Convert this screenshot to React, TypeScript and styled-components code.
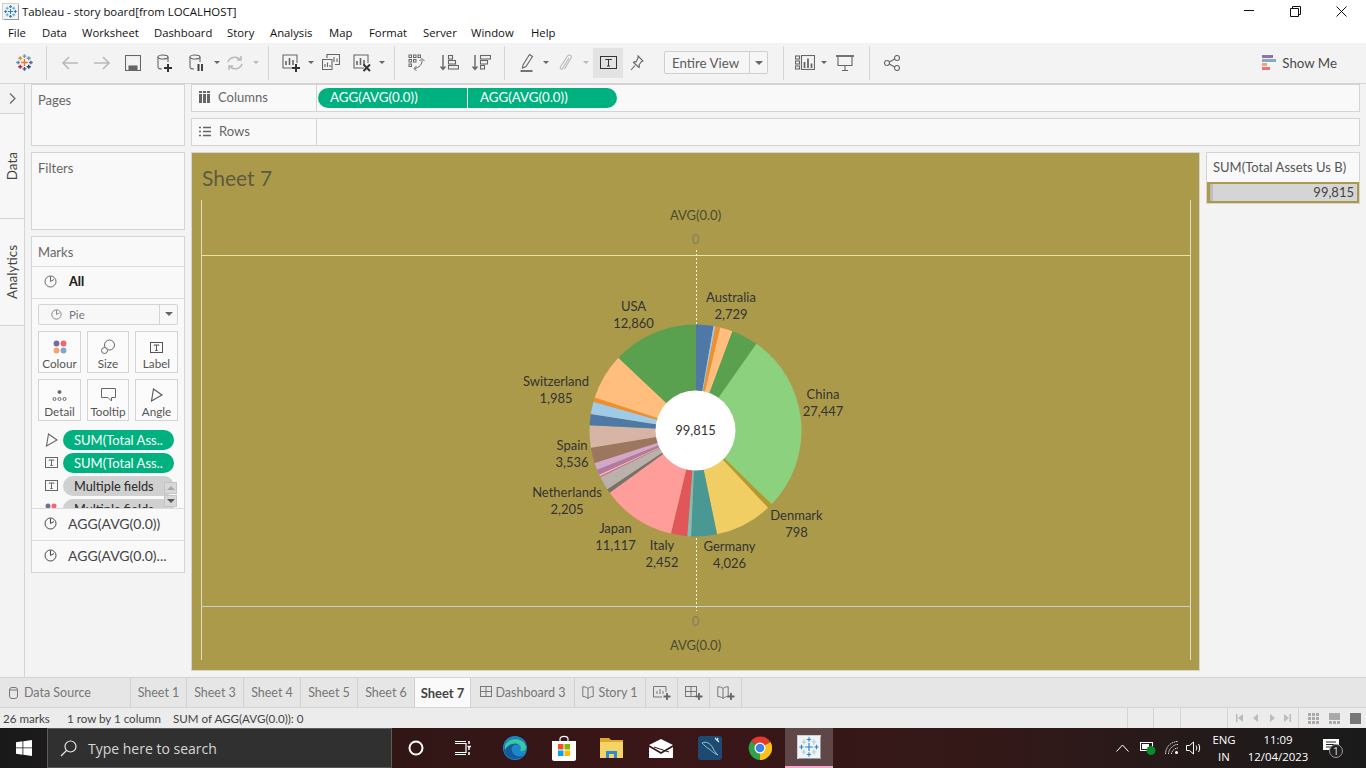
import React from 'react';
import styled, { createGlobalStyle } from 'styled-components';

const GlobalStyle = createGlobalStyle`
  html, body { margin: 0; padding: 0; height: 100%; overflow: hidden; background: #f3f3f3; }
  body { font-family: 'Lato', 'Open Sans', sans-serif; color: #555; }
  * { box-sizing: border-box; }
`;

const Page = styled.div`
  width: 1366px;
  height: 768px;
  display: flex;
  flex-direction: column;
  overflow: hidden;
`;

/* window chrome */
const TitleBar = styled.div`
  height: 22px;
  background: #fff;
  display: flex;
  align-items: center;
  padding-left: 3px;
  gap: 4px;
  font: 11.4px 'Open Sans', sans-serif;
  color: #111;
`;
const WindowButtons = styled.div`
  margin-left: auto;
  padding-right: 2px;
  display: flex;
  color: #111;
`;
const WindowButton = styled.div`
  width: 46px;
  height: 22px;
  display: flex;
  align-items: center;
  justify-content: center;
`;
const MenuBar = styled.div`
  height: 21px;
  background: #fff;
  display: flex;
  align-items: center;
  padding-left: 8px;
  font: 11.3px 'Open Sans', sans-serif;
  color: #111;
`;
const MenuItem = styled.span<{ $w: number }>`
  width: ${(p) => p.$w}px;
  flex: none;
  white-space: nowrap;
`;

/* toolbar */
const Toolbar = styled.div`
  height: 41px;
  background: #f3f3f3;
  border-bottom: 1px solid #d4d4d4;
  display: flex;
  align-items: center;
  padding: 0 29px 0 8px;
  color: #666;
`;
const ToolSlot = styled.div<{ $w: number; $off?: boolean; $on?: boolean; $ml?: number }>`
  width: ${(p) => p.$w}px;
  height: 30px;
  flex: none;
  margin-left: ${(p) => p.$ml ?? 0}px;
  display: flex;
  align-items: center;
  justify-content: center;
  color: ${(p) => (p.$off ? '#b9b9b9' : 'inherit')};
  background: ${(p) => (p.$on ? '#e3e3e3' : 'transparent')};
`;
const ToolSep = styled.div<{ $m?: number; $mr?: number }>`
  width: 1px;
  height: 34px;
  flex: none;
  margin: 0 ${(p) => p.$mr ?? p.$m ?? 6}px 0 ${(p) => p.$m ?? 6}px;
  background: #d6d6d6;
`;
const Caret = styled.div<{ $off?: boolean }>`
  width: 0;
  height: 0;
  border-left: 3px solid transparent;
  border-right: 3px solid transparent;
  border-top: 3px solid ${(p) => (p.$off ? '#b9b9b9' : '#666')};
`;
const FitSelect = styled.div`
  width: 104px;
  height: 23px;
  margin-left: 13px;
  flex: none;
  border: 1px solid #cfcfcf;
  border-radius: 2px;
  background: #f6f6f6;
  display: flex;
  align-items: center;
  font-size: 13.3px;
  color: #5c5c5c;
`;
const FitValue = styled.div`
  flex: 1;
  padding-left: 7px;
  white-space: nowrap;
`;
const FitArrow = styled.div`
  width: 18px;
  height: 100%;
  border-left: 1px solid #cfcfcf;
  display: flex;
  align-items: center;
  justify-content: center;
  & > div {
    border-left-width: 4px;
    border-right-width: 4px;
    border-top-width: 4px;
  }
`;
const ShowMe = styled.div`
  margin-left: auto;
  display: flex;
  align-items: center;
  gap: 6px;
  font-size: 13.3px;
  color: #4a4a4a;
`;

/* body */
const Body = styled.div`
  height: 594px;
  display: flex;
  background: #f3f3f3;
`;
const Rail = styled.div`
  width: 25px;
  flex: none;
  border-right: 1px solid #d4d4d4;
  display: flex;
  flex-direction: column;
`;
const RailToggle = styled.div`
  height: 30px;
  border-bottom: 1px solid #d4d4d4;
  display: flex;
  align-items: center;
  justify-content: center;
  color: #666;
`;
const RailTab = styled.div<{ $h: number }>`
  height: ${(p) => p.$h}px;
  border-bottom: 1px solid #d4d4d4;
  display: flex;
  align-items: center;
  justify-content: center;
  padding-right: 1px;
  background: #f7f7f7;
  font-size: 13.5px;
  color: #444;
  & > span {
    writing-mode: vertical-rl;
    transform: rotate(180deg);
  }
`;
const SideColumn = styled.div`
  width: 154px;
  flex: none;
  margin: 0 6px;
  display: flex;
  flex-direction: column;
  gap: 6px;
`;
const Card = styled.div<{ $h: number }>`
  height: ${(p) => p.$h}px;
  flex: none;
  background: #f9f9f9;
  border: 1px solid #d4d4d4;
`;
const CardTitle = styled.div`
  height: 29px;
  padding: 7px 0 0 6px;
  font-size: 13px;
  color: #666;
`;
const MarksTitle = styled(CardTitle)`
  height: 30px;
  border-bottom: 1px solid #dcdcdc;
`;
const AllRow = styled.div`
  height: 32px;
  border-bottom: 1px solid #dcdcdc;
  display: flex;
  align-items: center;
  padding-left: 12px;
  padding-bottom: 1px;
  gap: 12px;
  color: #666;
  font-size: 12.5px;
  font-weight: 700;
  & > b {
    color: #222;
  }
`;
const MarkSelect = styled.div`
  height: 21px;
  margin: 5px 6px 0;
  border: 1px solid #d4d4d4;
  background: #f7f7f7;
  border-radius: 2px;
  display: flex;
  align-items: center;
  padding-left: 12px;
  gap: 7px;
  font-size: 11.5px;
  color: #777;
`;
const MarkSelectArrow = styled.div`
  margin-left: auto;
  width: 18px;
  height: 100%;
  border-left: 1px solid #d4d4d4;
  display: flex;
  align-items: center;
  justify-content: center;
  & > div {
    border-left-width: 4px;
    border-right-width: 4px;
    border-top-width: 4px;
  }
`;
const MarkGrid = styled.div`
  margin: 6px 6px 0;
  display: grid;
  grid-template-columns: 43px 42px 43px;
  grid-auto-rows: 42px;
  column-gap: 6px;
  row-gap: 6px;
`;
const MarkButton = styled.div`
  border: 1px solid #d4d4d4;
  background: #fbfbfb;
  display: flex;
  flex-direction: column;
  align-items: center;
  justify-content: flex-end;
  padding-bottom: 2px;
  gap: 2px;
  font-size: 11.7px;
  white-space: nowrap;
  color: #555;
`;
const FieldList = styled.div`
  position: relative;
  height: 79px;
  margin-top: 9px;
  padding-left: 12px;
  overflow: hidden;
  border-bottom: 1px solid #dcdcdc;
  display: flex;
  flex-direction: column;
  gap: 3px;
`;
const FieldRow = styled.div`
  display: flex;
  align-items: center;
  gap: 5px;
  flex: none;
  height: 20px;
  color: #666;
`;
const FieldIcon = styled.div`
  width: 14px;
  display: flex;
  justify-content: center;
  flex: none;
`;
const MarkPill = styled.div<{ $grey?: boolean }>`
  width: 111px;
  height: 20px;
  border-radius: 10px;
  padding-left: 11px;
  line-height: 20px;
  font-size: ${(p) => (p.$grey ? 12.7 : 13)}px;
  white-space: nowrap;
  overflow: hidden;
  background: ${(p) => (p.$grey ? '#d0d0d0' : '#00b180')};
  color: ${(p) => (p.$grey ? '#333' : '#fff')};
  font-weight: ${(p) => (p.$grey ? 500 : 400)};
`;
const ScrollArrows = styled.div`
  position: absolute;
  right: 7px;
  bottom: 1px;
  width: 13px;
  display: flex;
  flex-direction: column;
  gap: 1px;
`;
const ScrollArrow = styled.div<{ $up?: boolean }>`
  height: 12px;
  background: #d8d8d8;
  border: 1px solid #c4c4c4;
  display: flex;
  align-items: center;
  justify-content: center;
  &::after {
    content: '';
    border-left: 4px solid transparent;
    border-right: 4px solid transparent;
    ${(p) => (p.$up ? 'border-bottom: 4px solid #a8a8a8;' : 'border-top: 4px solid #555;')}
  }
`;
const AggRow = styled.div<{ $line?: boolean }>`
  height: ${(p) => (p.$line ? 32 : 31)}px;
  display: flex;
  align-items: center;
  padding-left: 12px;
  padding-bottom: 1px;
  gap: 11px;
  font-size: 14px;
  white-space: nowrap;
  color: #444;
  border-bottom: ${(p) => (p.$line ? '1px solid #dcdcdc' : 'none')};
`;

const Workspace = styled.div`
  flex: 1;
  margin-right: 6px;
  display: flex;
  flex-direction: column;
  gap: 6px;
  min-width: 0;
`;
const Shelf = styled.div`
  height: 28px;
  flex: none;
  background: #f9f9f9;
  border: 1px solid #d4d4d4;
  display: flex;
  align-items: center;
`;
const ShelfLabel = styled.div`
  width: 125px;
  height: 100%;
  flex: none;
  border-right: 1px solid #d4d4d4;
  display: flex;
  align-items: center;
  gap: 8px;
  padding: 0 0 1px 7px;
  font-size: 13px;
  color: #666;
`;
const ShelfPills = styled.div`
  display: flex;
  gap: 1px;
  padding-left: 1px;
`;
const ShelfPill = styled.div<{ $side: 'left' | 'right' }>`
  width: 149px;
  height: 20px;
  background: #00b180;
  color: #fff;
  font-size: 13.3px;
  line-height: 19px;
  padding-left: 12px;
  border-radius: ${(p) => (p.$side === 'left' ? '10px 0 0 10px' : '0 10px 10px 0')};
`;
const ViewRow = styled.div`
  flex: 1;
  display: flex;
  gap: 6px;
  min-height: 0;
`;
const SheetView = styled.div`
  width: 1009px;
  height: 519px;
  flex: none;
  background: #ab9a4a;
  border: 1px solid #d4d4d4;
  display: flex;
  flex-direction: column;
`;
const SheetTitle = styled.div`
  height: 47px;
  padding: 12px 0 0 10px;
  font-size: 21px;
  line-height: 26px;
  color: #5d5a3f;
`;
const ChartSvg = styled.svg`
  display: block;
  font-family: 'Lato', 'Open Sans', sans-serif;
  font-size: 13px;
`;
const Legend = styled.div`
  width: 154px;
  height: 52px;
  flex: none;
  background: #f9f9f9;
  border: 1px solid #d4d4d4;
`;
const LegendTitle = styled.div`
  height: 29px;
  padding: 6px 0 0 6px;
  font-size: 13px;
  color: #555;
  white-space: nowrap;
`;
const LegendBar = styled.div`
  height: 21px;
  background: #d5d5d5;
  border: 2px solid #ab9a4a;
  border-left-width: 3px;
  font-size: 13px;
  line-height: 17px;
  text-align: right;
  padding-right: 3px;
  color: #444;
  box-shadow: inset 3px 0 0 #bdbdbd;
`;

/* sheet tabs + status */
const TabBar = styled.div`
  height: 31px;
  flex: none;
  display: flex;
  background: #e6e6e6;
  border-top: 1px solid #d4d4d4;
  border-bottom: 1px solid #d4d4d4;
`;
const SheetTab = styled.div<{ $w: number; $active?: boolean }>`
  width: ${(p) => p.$w}px;
  flex: none;
  border-right: 1px solid #d0d0d0;
  display: flex;
  align-items: center;
  justify-content: center;
  gap: 4px;
  font-size: ${(p) => (p.$active ? 13 : 12.5)}px;
  white-space: nowrap;
  color: ${(p) => (p.$active ? '#444' : '#777')};
  font-weight: ${(p) => (p.$active ? 700 : 400)};
  background: ${(p) => (p.$active ? '#fafafa' : 'transparent')};
`;
const DataSourceTab = styled(SheetTab)`
  justify-content: flex-start;
  padding-left: 9px;
  gap: 6px;
`;
const StatusBar = styled.div`
  height: 20px;
  flex: none;
  background: #ececec;
  display: flex;
  align-items: center;
  font-size: 11.6px;
  color: #444;
`;
const StatusText = styled.span<{ $w: number }>`
  width: ${(p) => p.$w}px;
  flex: none;
  padding-left: 3px;
  white-space: nowrap;
`;
const StatusCell = styled.div<{ $w: number }>`
  width: ${(p) => p.$w}px;
  height: 100%;
  flex: none;
  border-left: 1px solid #d4d4d4;
  display: flex;
  align-items: center;
  justify-content: center;
`;
const ViewModes = styled(StatusCell)`
  justify-content: flex-start;
  padding-left: 9px;
  gap: 10px;
`;

/* taskbar */
const Taskbar = styled.div`
  height: 40px;
  flex: none;
  display: flex;
  align-items: center;
  color: #fff;
  background: linear-gradient(90deg, #191919 0, #1c1a1a 47px, #311616 395px, #3a1618 650px, #331818 1000px, #241a1a 1200px, #1a1a1a 1366px);
  font: 11.4px 'Open Sans', sans-serif;
`;
const StartButton = styled.div`
  width: 47px;
  height: 100%;
  flex: none;
  display: flex;
  align-items: center;
  justify-content: center;
`;
const SearchBox = styled.div`
  width: 345px;
  height: 100%;
  flex: none;
  background: #303030;
  border: 1px solid #5c5c5c;
  border-bottom-color: #555;
  display: flex;
  align-items: center;
  gap: 11px;
  padding-left: 12px;
  font-size: 14px;
  color: #d6d6d6;
`;
const TaskIcon = styled.div<{ $w: number; $active?: boolean; $ml?: number }>`
  width: ${(p) => p.$w}px;
  height: 100%;
  flex: none;
  margin-left: ${(p) => p.$ml ?? 0}px;
  display: flex;
  align-items: center;
  justify-content: center;
  background: ${(p) => (p.$active ? '#604747' : 'transparent')};
  border-bottom: ${(p) => (p.$active ? '2px solid #f4a6cf' : 'none')};
`;
const LogoTile = styled.div<{ $size: number }>`
  width: ${(p) => p.$size}px;
  height: ${(p) => p.$size}px;
  flex: none;
  display: flex;
  align-items: center;
  justify-content: center;
  background: #f2f5f8;
  box-shadow: 1px 1px 0 #9a9a9a, 0 0 0 1px #cfcfcf;
`;
const Tray = styled.div`
  margin-left: auto;
  display: flex;
  align-items: center;
  height: 100%;
`;
const TraySlot = styled.div<{ $w: number }>`
  width: ${(p) => p.$w}px;
  flex: none;
  display: flex;
  justify-content: center;
`;
const TrayStack = styled.div<{ $w: number }>`
  width: ${(p) => p.$w}px;
  flex: none;
  text-align: center;
  line-height: 17px;
  white-space: nowrap;
`;

/* icons */
type IconProps = { w?: number; h?: number; children: React.ReactNode; sw?: number };
const Ico = ({ w = 18, h = 18, sw = 1.1, children }: IconProps) => (
  <svg width={w} height={h} viewBox={`0 0 ${w} ${h}`} fill="none" stroke="currentColor" strokeWidth={sw}>
    {children}
  </svg>
);

// centre, top, bottom, left, right, then the four diagonals
const crossLayout = (scale: number) =>
  [
    [10, 10, 4],
    [10, 2.5, 2.2],
    [10, 17.5, 2.2],
    [2.5, 10, 2.2],
    [17.5, 10, 2.2],
    [5, 5, 2.4],
    [15, 5, 2.4],
    [5, 15, 2.4],
    [15, 15, 2.4],
  ].map(([x, y, r]) => [x * scale, y * scale, r * scale]);

const TableauMark = ({ size = 20, colors, sw = 1.3 }: { size?: number; colors: string[]; sw?: number }) => (
  <svg width={size} height={size} viewBox={`0 0 ${size} ${size}`} strokeWidth={sw}>
    {crossLayout(size / 20).map(([x, y, r], i) => (
      <path key={i} d={`M${x - r} ${y}H${x + r}M${x} ${y - r}V${y + r}`} stroke={colors[i % colors.length]} />
    ))}
  </svg>
);

const Plus = ({ x, y }: { x: number; y: number }) => (
  <path d={`M${x - 4} ${y}H${x + 4}M${x} ${y - 4}V${y + 4}`} stroke="#333" strokeWidth={2} />
);
const SheetGlyph = ({ extra }: { extra?: React.ReactNode }) => (
  <Ico w={20} h={20}>
    <path d="M12 15H2V2H16V10" />
    <path d="M5 12V8M8.500 12V5M12 12V7" strokeWidth={1.6} />
    {extra}
  </Ico>
);
const DbGlyph = ({ extra }: { extra?: React.ReactNode }) => (
  <Ico w={20} h={20}>
    <ellipse cx={8} cy={4} rx={5} ry={2} />
    <path d="M3 4V14C3 15.500 5 16 7 16M13 4V9" />
    {extra}
  </Ico>
);
const PieIcon = ({ size = 13 }: { size?: number }) => (
  <svg width={size} height={size} viewBox="0 0 13 13" fill="none" stroke="currentColor" strokeWidth={1}>
    <circle cx={6.500} cy={6.500} r={5.500} />
    <path d="M6.500 1.500V6.500L10 4.500" />
  </svg>
);
const TextBox = ({ size = 13 }: { size?: number }) => (
  <svg width={size} height={size} viewBox="0 0 13 13" fill="none" stroke="currentColor" strokeWidth={1}>
    <rect x={0.500} y={1.500} width={12} height={10} />
    <path d="M4 4.500V4H9V4.500M6.500 4V9.500M5.300 9.500H7.700" />
  </svg>
);
const AngleIcon = () => (
  <svg width={13} height={14} viewBox="0 0 13 14" fill="none" stroke="currentColor" strokeWidth={1.100}>
    <path d="M3.500 1L12 7L1.500 13Z" />
  </svg>
);
const DotsIcon = ({ size = 12 }: { size?: number }) => (
  <svg width={size} height={size} viewBox="0 0 12 12">
    <circle cx={3} cy={3} r={2.500} fill="#7b6a96" />
    <circle cx={9} cy={3} r={2.500} fill="#f0656e" />
    <circle cx={3} cy={9} r={2.500} fill="#f3a56b" />
    <circle cx={9} cy={9} r={2.500} fill="#7fa6d0" />
  </svg>
);
const DbSmall = () => (
  <svg width={9} height={12} viewBox="0 0 9 12" fill="none" stroke="#777" strokeWidth={1}>
    <rect x={0.500} y={0.500} width={8} height={11} rx={2.500} />
    <path d="M1 3H8" />
  </svg>
);
const DashGlyph = ({ extra }: { extra?: React.ReactNode }) => (
  <svg width={extra ? 18 : 12} height={16} viewBox={`0 0 ${extra ? 18 : 12} 16`} fill="none" stroke="#777" strokeWidth={1}>
    <rect x={0.500} y={1.500} width={11} height={10} />
    <path d="M0.500 6.500H11.500M6 1.500V11.500" />
    {extra}
  </svg>
);
const BookGlyph = ({ extra }: { extra?: React.ReactNode }) => (
  <svg width={extra ? 18 : 12} height={16} viewBox={`0 0 ${extra ? 18 : 12} 16`} fill="none" stroke="#777" strokeWidth={1}>
    <path d="M6 3.500C4.500 2 2.500 1.800 0.800 1.800V11.500C2.500 11.500 4.500 12 6 13.500C7.500 12 9.500 11.500 11.200 11.500V1.800C9.500 1.800 7.500 2 6 3.500ZM6 3.500V13.500" />
    {extra}
  </svg>
);
const GreyPlus = () => <path d="M14 8V15M10.500 11.500H17.500" stroke="#666" strokeWidth={1.800} />;

/* chart data: angles are read clockwise from 12 o'clock */
const CX = 695.5;
const CY = 430.5;
const R = 106;

const slices: [number, string][] = [
  [9.8, '#4e79a7'],
  [10.9, '#a0cbe8'],
  [13.5, '#f28e2b'],
  [20.4, '#ffbe7d'],
  [35.1, '#59a14f'],
  [134.1, '#8cd17d'],
  [136.8, '#b6992d'],
  [168.3, '#f1ce63'],
  [182.4, '#499894'],
  [184.5, '#86bcb6'],
  [193.4, '#e15759'],
  [234.1, '#ff9d9a'],
  [236.4, '#79706e'],
  [243.8, '#bab0ac'],
  [244.6, '#d37295'],
  [245.4, '#fabfd2'],
  [248.2, '#b07aa1'],
  [252.1, '#d4a6c8'],
  [260.7, '#9d7660'],
  [272.9, '#d7b5a6'],
  [279, '#4e79a7'],
  [285.8, '#a0cbe8'],
  [288.1, '#f28e2b'],
  [313.3, '#ffbe7d'],
  [360, '#59a14f'],
];

const labels: [string, string, number, number][] = [
  ['USA', '12,860', 633.5, 311],
  ['Australia', '2,729', 731, 302],
  ['China', '27,447', 823, 399],
  ['Denmark', '798', 796.5, 520],
  ['Germany', '4,026', 729.5, 551],
  ['Italy', '2,452', 662, 550],
  ['Japan', '11,117', 615.5, 533],
  ['Netherlands', '2,205', 567, 497],
  ['Spain', '3,536', 572, 450],
  ['Switzerland', '1,985', 556, 386],
];

const point = (deg: number) => {
  const rad = (deg * Math.PI) / 180;
  return `${(CX + R * Math.sin(rad)).toFixed(2)} ${(CY - R * Math.cos(rad)).toFixed(2)}`;
};

const PieChart = () => (
  <ChartSvg width={1007} height={470} viewBox="192 200 1007 470">
    <path d="M201.500 200V660M1190.500 200V660" stroke="#dcdcc8" strokeWidth={1} />
    <path d="M201 255.500H1191" stroke="#e9e2a6" strokeWidth={1} />
    <path d="M201 606.500H1191" stroke="#c9cdd6" strokeWidth={1} />
    <path d="M696.500 250V611" stroke="#f2f2f2" strokeWidth={1} strokeDasharray="2 2" />
    <text x={695.5} y={220} textAnchor="middle" fill="#4a4a33">AVG(0.0)</text>
    <text x={695.5} y={244} textAnchor="middle" fill="#86805a">0</text>
    <text x={695.5} y={626} textAnchor="middle" fill="#86805a">0</text>
    <text x={695.5} y={650} textAnchor="middle" fill="#4a4a33">AVG(0.0)</text>
    {slices.map(([end, color], i) => {
      const start = i === 0 ? 0 : slices[i - 1][0];
      const large = end - start > 180 ? 1 : 0;
      return (
        <path
          key={i}
          d={`M${CX} ${CY}L${point(start)}A${R} ${R} 0 ${large} 1 ${point(end)}Z`}
          fill={color}
        />
      );
    })}
    <circle cx={CX} cy={CY} r={40} fill="#fff" />
    <text x={CX} y={434.5} textAnchor="middle" fill="#333">99,815</text>
    {labels.map(([name, value, x, y]) => (
      <g key={name} textAnchor="middle" fill="#333">
        <text x={x} y={y}>{name}</text>
        <text x={x} y={y + 17}>{value}</text>
      </g>
    ))}
  </ChartSvg>
);

const menu: [string, number][] = [
  ['File', 34],
  ['Data', 40],
  ['Worksheet', 72],
  ['Dashboard', 73],
  ['Story', 43],
  ['Analysis', 59],
  ['Map', 40],
  ['Format', 54],
  ['Server', 48],
  ['Window', 60],
  ['Help', 40],
];

const tabs: [string, number][] = [
  ['Sheet 1', 56],
  ['Sheet 3', 57],
  ['Sheet 4', 57],
  ['Sheet 5', 57],
  ['Sheet 6', 57],
];

const logoColors = ['#e8762d', '#6f9bb0', '#3c5a86', '#5b8fb0', '#5b6591', '#eb912b', '#7099a6', '#c72035', '#1f447e'];
const tileColors = ['#2f86c8', '#2f86c8', '#2f86c8', '#2f86c8', '#2f86c8', '#a9cde8', '#a9cde8', '#a9cde8', '#a9cde8'];

const App = () => (
  <Page>
    <GlobalStyle />
    <TitleBar>
      <LogoTile $size={15}>
        <TableauMark size={13} sw={1.1} colors={['#2f7fb5', '#2f7fb5', '#2f7fb5', '#2f7fb5', '#2f7fb5', '#6fa9d0', '#6fa9d0', '#6fa9d0', '#6fa9d0']} />
      </LogoTile>
      Tableau - story board[from LOCALHOST]
      <WindowButtons>
        <WindowButton>
          <svg width={10} height={10} stroke="currentColor"><path d="M0 4.500H10" /></svg>
        </WindowButton>
        <WindowButton>
          <svg width={11} height={11} fill="none" stroke="currentColor"><path d="M0.500 2.500H8.500V10.500H0.500ZM2.500 2.500V0.500H10.500V8.500H8.500" /></svg>
        </WindowButton>
        <WindowButton>
          <svg width={11} height={11} stroke="currentColor"><path d="M0.500 0.500L10.500 10.500M10.500 0.500L0.500 10.500" /></svg>
        </WindowButton>
      </WindowButtons>
    </TitleBar>
    <MenuBar>
      {menu.map(([name, w]) => (
        <MenuItem key={name} $w={w}>{name}</MenuItem>
      ))}
    </MenuBar>
    <Toolbar>
      <ToolSlot $w={32}><TableauMark size={17} sw={1.4} colors={logoColors} /></ToolSlot>
      <ToolSep />
      <ToolSlot $w={34} $off>
        <Ico sw={1.600}><path d="M17 9H2M8 3L2 9L8 15" /></Ico>
      </ToolSlot>
      <ToolSlot $w={30} $off>
        <Ico sw={1.600}><path d="M1 9H16M10 3L16 9L10 15" /></Ico>
      </ToolSlot>
      <ToolSlot $w={32}>
        <Ico w={16} h={16}>
          <rect x={0.500} y={0.500} width={15} height={15} />
          <rect x={4} y={11} width={8} height={4.500} fill="currentColor" />
        </Ico>
      </ToolSlot>
      <ToolSlot $w={32}><DbGlyph extra={<Plus x={13} y={15} />} /></ToolSlot>
      <ToolSlot $w={32}>
        <DbGlyph extra={<path d="M11.500 11V18M15 11V18" stroke="#444" strokeWidth={2} />} />
      </ToolSlot>
      <ToolSlot $w={7}><Caret /></ToolSlot>
      <ToolSlot $w={30} $off>
        <Ico sw={1.500}>
          <path d="M2 8C3 4 8 2 12 4L15 6M15 2V6H11M16 10C15 14 10 16 6 14L3 12M3 16V12H7" />
        </Ico>
      </ToolSlot>
      <ToolSlot $w={12}><Caret $off /></ToolSlot>
      <ToolSep />
      <ToolSlot $w={32}><SheetGlyph extra={<Plus x={15} y={15} />} /></ToolSlot>
      <ToolSlot $w={7}><Caret /></ToolSlot>
      <ToolSlot $w={34}>
        <Ico w={18} h={18}>
          <path d="M5 4V0.500H17.500V10.500H13" />
          <path d="M9 8V5M12 8V3M15 8V4.500" />
          <path d="M0.500 5.500H10V15.500H0.500Z" fill="#f3f3f3" />
          <path d="M3 13V10M5.500 13V8.500M8 13V11" />
        </Ico>
      </ToolSlot>
      <ToolSlot $w={28}>
        <SheetGlyph
          extra={<path d="M11.500 11.500L18 18M18 11.500L11.500 18" stroke="#333" strokeWidth={2} />}
        />
      </ToolSlot>
      <ToolSlot $w={12}><Caret /></ToolSlot>
      <ToolSep />
      <ToolSlot $w={32}>
        <Ico w={18} h={18} sw={1}>
          <rect x={1} y={1} width={2.500} height={2.500} />
          <rect x={5.500} y={1} width={2.500} height={2.500} />
          <rect x={10} y={1} width={2.500} height={2.500} />
          <rect x={1} y={5.500} width={2.500} height={2.500} />
          <rect x={5.500} y={5.500} width={2.500} height={2.500} />
          <rect x={1} y={10} width={2.500} height={2.500} />
          <path d="M14 6C14.500 10 11 14 6.500 14.500M11.500 7L14 4.500L16.500 7M8.500 12L6 14.500L8.500 17" />
        </Ico>
      </ToolSlot>
      <ToolSlot $w={32}>
        <Ico w={19} h={18}>
          <path d="M3 1V15M0.500 12.500L3 15.500L5.500 12.500" strokeWidth={1.400} />
          <rect x={8.500} y={1.500} width={4} height={3.500} />
          <rect x={8.500} y={6.500} width={7} height={3.500} />
          <rect x={8.500} y={11.500} width={10} height={3.500} />
        </Ico>
      </ToolSlot>
      <ToolSlot $w={32}>
        <Ico w={19} h={18}>
          <path d="M3 1V15M0.500 12.500L3 15.500L5.500 12.500" strokeWidth={1.400} />
          <rect x={8.500} y={1.500} width={10} height={3.500} />
          <rect x={8.500} y={6.500} width={7} height={3.500} />
          <rect x={8.500} y={11.500} width={4} height={3.500} />
        </Ico>
      </ToolSlot>
      <ToolSep $m={7} />
      <ToolSlot $w={30}>
        <Ico w={14} h={19}>
          <path d="M3 12L9.500 1.500L12.500 3.500L6 13.500L2.500 15Z" />
          <path d="M0.500 18H12.500" strokeWidth={1.800} />
        </Ico>
      </ToolSlot>
      <ToolSlot $w={7}><Caret /></ToolSlot>
      <ToolSlot $w={34} $off>
        <Ico w={14} h={18}>
          <path d="M10 4L4 14C3 16 0.500 15 1.500 13L8.500 2C10 0 13 1.500 12 4L5.500 15" />
        </Ico>
      </ToolSlot>
      <ToolSlot $w={5}><Caret $off /></ToolSlot>
      <ToolSlot $w={30} $on $ml={5}>
        <svg width={17} height={15} viewBox="0 0 17 15" fill="none" stroke="#333" strokeWidth={1}>
          <rect x={0.500} y={1.500} width={16} height={12} />
          <path d="M5.500 5V4.500H11.500V5M8.500 4.500V11M7 11H10" />
        </svg>
      </ToolSlot>
      <ToolSlot $w={28}>
        <Ico w={14} h={16}>
          <path d="M8 1L13 6L11.500 6.500L9 10C9.500 11 9.500 12 9 12.500L3.500 7.500C4 6.500 5 6.500 6 7L8 3Z" />
          <path d="M5 10.500L1 15" />
        </Ico>
      </ToolSlot>
      <FitSelect>
        <FitValue>Entire View</FitValue>
        <FitArrow><Caret /></FitArrow>
      </FitSelect>
      <ToolSep $m={15} $mr={6} />
      <ToolSlot $w={30}>
        <Ico w={20} h={15}>
          <rect x={0.500} y={1} width={4} height={3} />
          <rect x={0.500} y={6} width={4} height={3} />
          <rect x={0.500} y={11} width={4} height={3} />
          <rect x={6.500} y={0.500} width={13} height={14} />
          <path d="M9.500 13V7M13 13V3.500M16.500 13V8.500" strokeWidth={1.800} />
        </Ico>
      </ToolSlot>
      <ToolSlot $w={7}><Caret /></ToolSlot>
      <ToolSlot $w={36}>
        <Ico w={18} h={16}>
          <path d="M0 1H18" strokeWidth={1.800} />
          <path d="M2 1.500V10.500H16V1.500M9 10.500V15M6 15.500H12" />
        </Ico>
      </ToolSlot>
      <ToolSep />
      <ToolSlot $w={32}>
        <Ico w={16} h={16}>
          <circle cx={3} cy={8} r={2.500} />
          <circle cx={13} cy={3} r={2.500} />
          <circle cx={13} cy={13} r={2.500} />
          <path d="M5.300 7L10.700 4M5.300 9L10.700 12" />
        </Ico>
      </ToolSlot>
      <ShowMe>
        <svg width={14} height={16} viewBox="0 0 14 16">
          <rect x={0} y={0} width={11} height={3} fill="#8a76a0" />
          <rect x={0} y={4} width={14} height={3} fill="#84a8cf" />
          <rect x={0} y={8} width={5} height={3} fill="#f3a56b" />
          <rect x={0} y={12} width={8} height={3} fill="#f0707a" />
        </svg>
        Show Me
      </ShowMe>
    </Toolbar>

    <Body>
      <Rail>
        <RailToggle>
          <svg width={7} height={11} fill="none" stroke="currentColor" strokeWidth={1.200}><path d="M1 0.500L6 5.500L1 10.500" /></svg>
        </RailToggle>
        <RailTab $h={105}><span>Data</span></RailTab>
        <RailTab $h={107}><span>Analytics</span></RailTab>
      </Rail>
      <SideColumn>
        <Card $h={62}><CardTitle>Pages</CardTitle></Card>
        <Card $h={78}><CardTitle>Filters</CardTitle></Card>
        <Card $h={337}>
          <MarksTitle>Marks</MarksTitle>
          <AllRow><PieIcon /><b>All</b></AllRow>
          <MarkSelect>
            <PieIcon size={11} />
            Pie
            <MarkSelectArrow><Caret /></MarkSelectArrow>
          </MarkSelect>
          <MarkGrid>
            <MarkButton><DotsIcon size={14} />Colour</MarkButton>
            <MarkButton>
              <svg width={15} height={15} viewBox="0 0 15 15" fill="none" stroke="#666">
                <circle cx={8.500} cy={6} r={5} />
                <circle cx={3.500} cy={11.500} r={3} fill="#fbfbfb" />
              </svg>
              Size
            </MarkButton>
            <MarkButton><TextBox />Label</MarkButton>
            <MarkButton>
              <svg width={15} height={12} viewBox="0 0 15 12" fill="none" stroke="#666">
                <circle cx={7.500} cy={2} r={1.500} fill="#666" />
                <circle cx={2.500} cy={9} r={1.500} />
                <circle cx={7.500} cy={9} r={1.500} />
                <circle cx={12.500} cy={9} r={1.500} />
              </svg>
              Detail
            </MarkButton>
            <MarkButton>
              <svg width={15} height={14} viewBox="0 0 15 14" fill="none" stroke="#666">
                <path d="M0.500 0.500H14.500V9.500H10.500V13L7 9.500H0.500Z" />
              </svg>
              Tooltip
            </MarkButton>
            <MarkButton><AngleIcon />Angle</MarkButton>
          </MarkGrid>
          <FieldList>
            <FieldRow><FieldIcon><AngleIcon /></FieldIcon><MarkPill>SUM(Total Ass..</MarkPill></FieldRow>
            <FieldRow><FieldIcon><TextBox /></FieldIcon><MarkPill>SUM(Total Ass..</MarkPill></FieldRow>
            <FieldRow><FieldIcon><TextBox /></FieldIcon><MarkPill $grey>Multiple fields</MarkPill></FieldRow>
            <FieldRow><FieldIcon><DotsIcon /></FieldIcon><MarkPill $grey>Multiple fields</MarkPill></FieldRow>
            <ScrollArrows>
              <ScrollArrow $up />
              <ScrollArrow />
            </ScrollArrows>
          </FieldList>
          <AggRow $line><PieIcon />AGG(AVG(0.0))</AggRow>
          <AggRow><PieIcon />AGG(AVG(0.0)...</AggRow>
        </Card>
      </SideColumn>
      <Workspace>
        <Shelf>
          <ShelfLabel>
            <svg width={11} height={12} fill="#666"><path d="M0 3H3V12H0ZM4 3H7V12H4ZM8 3H11V12H8ZM0 0H3V2H0ZM4 0H7V2H4ZM8 0H11V2H8Z" /></svg>
            Columns
          </ShelfLabel>
          <ShelfPills>
            <ShelfPill $side="left">AGG(AVG(0.0))</ShelfPill>
            <ShelfPill $side="right">AGG(AVG(0.0))</ShelfPill>
          </ShelfPills>
        </Shelf>
        <Shelf>
          <ShelfLabel>
            <svg width={12} height={11} stroke="#666" strokeWidth={1.600}><path d="M0 1.500H2M4 1.500H12M0 5.500H2M4 5.500H12M0 9.500H2M4 9.500H12" /></svg>
            Rows
          </ShelfLabel>
        </Shelf>
        <ViewRow>
          <SheetView>
            <SheetTitle>Sheet 7</SheetTitle>
            <PieChart />
          </SheetView>
          <Legend>
            <LegendTitle>SUM(Total Assets Us B)</LegendTitle>
            <LegendBar>99,815</LegendBar>
          </Legend>
        </ViewRow>
      </Workspace>
    </Body>

    <TabBar>
      <DataSourceTab $w={131}><DbSmall />Data Source</DataSourceTab>
      {tabs.map(([name, w]) => (
        <SheetTab key={name} $w={w}>{name}</SheetTab>
      ))}
      <SheetTab $w={56} $active>Sheet 7</SheetTab>
      <SheetTab $w={104}><DashGlyph />Dashboard 3</SheetTab>
      <SheetTab $w={71}><BookGlyph />Story 1</SheetTab>
      <SheetTab $w={32}>
        <svg width={18} height={16} viewBox="0 0 18 16" fill="none" stroke="#777">
          <path d="M9 12H0.500V1.500H13V7" />
          <path d="M4 9V6M7 9V4M10 9V6" />
          <GreyPlus />
        </svg>
      </SheetTab>
      <SheetTab $w={32}><DashGlyph extra={<GreyPlus />} /></SheetTab>
      <SheetTab $w={32}><BookGlyph extra={<GreyPlus />} /></SheetTab>
    </TabBar>
    <StatusBar>
      <StatusText $w={64}>26 marks</StatusText>
      <StatusText $w={106}>1 row by 1 column</StatusText>
      <StatusText $w={957}>SUM of AGG(AVG(0.0)): 0</StatusText>
      <StatusCell $w={26} />
      <StatusCell $w={27} />
      <StatusCell $w={47} />
      <StatusCell $w={71}>
        <svg width={55} height={9} viewBox="0 0 55 9" fill="#bcbcbc">
          <path d="M0 0H1.500V8H0ZM7 0V8L2 4ZM22 0V8L17 4ZM34 0V8L39 4ZM48 0V8L53 4ZM53.500 0H55V8H53.500Z" />
        </svg>
      </StatusCell>
      <ViewModes $w={68}>
        <svg width={11} height={11} viewBox="0 0 11 11" fill="#aaa">
          <path d="M0 0H3V3H0ZM4 0H7V3H4ZM8 0H11V3H8ZM0 4H3V7H0ZM4 4H7V7H4ZM8 4H11V7H8ZM0 8H3V11H0ZM4 8H7V11H4ZM8 8H11V11H8Z" />
        </svg>
        <svg width={11} height={11} viewBox="0 0 11 11" fill="#aaa">
          <path d="M0 0H11V7H0ZM0 8H3V11H0ZM4 8H7V11H4ZM8 8H11V11H8Z" />
        </svg>
        <svg width={11} height={11} fill="#777"><rect width={11} height={11} /></svg>
      </ViewModes>
    </StatusBar>

    <Taskbar>
      <StartButton>
        <svg width={16} height={16} viewBox="0 0 16 16" fill="#fff">
          <path d="M0 2.200L6.500 1.300V7.500H0ZM7.300 1.200L16 0V7.500H7.300ZM0 8.300H6.500V14.700L0 13.800ZM7.300 8.300H16V16L7.300 14.800Z" />
        </svg>
      </StartButton>
      <SearchBox>
        <svg width={17} height={17} viewBox="0 0 17 17" fill="none" stroke="#e6e6e6" strokeWidth={1.200}>
          <circle cx={10.500} cy={6.500} r={5.500} />
          <path d="M6.500 10.500L1 16" />
        </svg>
        Type here to search
      </SearchBox>
      <TaskIcon $w={48}>
        <svg width={16} height={16}><circle cx={8} cy={8} r={6.500} fill="none" stroke="#fff" strokeWidth={2} /></svg>
      </TaskIcon>
      <TaskIcon $w={46}>
        <svg width={17} height={15} viewBox="0 0 17 15" fill="none" stroke="#fff" strokeWidth={1.200}>
          <path d="M0 2.500H11V11.500H0M0 0.500H11M0 13.500H11" />
          <path d="M14 0V3M14 6V9M14 11V14M12.500 5.500H16" strokeWidth={1.500} />
        </svg>
      </TaskIcon>
      <TaskIcon $w={50} $ml={4}>
        <svg width={24} height={24} viewBox="0 0 24 24">
          <circle cx={12} cy={12} r={12} fill="#1d87c9" />
          <path d="M2 9C5 1 19 0 23 9C24 13 21 16 17 15C20 11 15 7 11 9C7 11 8 18 14 20C18 21 20 20 21 19C17 25 4 25 1 15Z" fill="#155a9c" />
          <path d="M2 9C6 1 20 1 23 10C24 14 20 16 17 15C20 10 14 6 9 8C5 9 3 12 2 14Z" fill="#36c9a8" />
        </svg>
      </TaskIcon>
      <TaskIcon $w={47}>
        <svg width={24} height={26} viewBox="0 0 24 26">
          <path d="M8 7V4C8 0.500 16 0.500 16 4V7" fill="none" stroke="#fff" strokeWidth={1.200} />
          <path d="M0 6H24V24C24 25 23 26 22 26H2C1 26 0 25 0 24Z" fill="#fff" />
          <rect x={6} y={9} width={5.500} height={5.500} fill="#f25022" />
          <rect x={12.500} y={9} width={5.500} height={5.500} fill="#7fba00" />
          <rect x={6} y={15.500} width={5.500} height={5.500} fill="#00a4ef" />
          <rect x={12.500} y={15.500} width={5.500} height={5.500} fill="#ffb900" />
        </svg>
      </TaskIcon>
      <TaskIcon $w={49}>
        <svg width={23} height={20} viewBox="0 0 23 20">
          <path d="M0 0H9L11 2H23V20H0Z" fill="#e0a92e" />
          <path d="M0 4H23V20H0Z" fill="#f6d365" />
          <path d="M6 20V13H17V20H14V16H9V20Z" fill="#2b8bd3" />
        </svg>
      </TaskIcon>
      <TaskIcon $w={49}>
        <svg width={24} height={19} viewBox="0 0 24 19">
          <path d="M0 6L12 0L24 6L12 13Z" fill="#fff" />
          <path d="M0 8L12 15L24 8V19H0Z" fill="#fff" />
          <path d="M5 8L20 13" stroke="#3a1618" strokeWidth={1} />
        </svg>
      </TaskIcon>
      <TaskIcon $w={50}>
        <svg width={24} height={24} viewBox="0 0 24 24">
          <rect width={24} height={24} rx={3} fill="#1d4a70" />
          <path d="M4 7C8 5 12 7 15 12C16 15 18 17 20 19C15 17 13 14 11 13C8 11 6 9 4 7Z" fill="none" stroke="#9cc3dc" strokeWidth={1} />
          <path d="M17 2L21 6M20 2L19 5" stroke="#dfe9f0" strokeWidth={1.200} />
        </svg>
      </TaskIcon>
      <TaskIcon $w={49}>
        <svg width={24} height={24} viewBox="0 0 24 24">
          <path d="M12 12L3 5A12 12 0 0 1 22.500 6Z" fill="#e33b2e" />
          <path d="M12 12L22.500 6A12 12 0 0 1 12 24Z" fill="#fbc116" />
          <path d="M12 12L12 24A12 12 0 0 1 3 5Z" fill="#2fa24a" />
          <circle cx={12} cy={12} r={5.500} fill="#fff" />
          <circle cx={12} cy={12} r={4.300} fill="#3f7fe8" />
        </svg>
      </TaskIcon>
      <TaskIcon $w={48} $ml={1} $active>
        <LogoTile $size={22}>
          <TableauMark size={20} sw={1.2} colors={tileColors} />
        </LogoTile>
      </TaskIcon>
      <Tray>
        <TraySlot $w={25}>
          <svg width={13} height={8} fill="none" stroke="#fff"><path d="M0.500 7.500L6.500 1L12.500 7.500" /></svg>
        </TraySlot>
        <TraySlot $w={25}>
          <svg width={16} height={14} viewBox="0 0 16 14">
            <rect x={0.500} y={1.500} width={12} height={8} fill="none" stroke="#fff" />
            <rect x={2} y={3} width={7} height={5} fill="#fff" />
            <circle cx={11} cy={9.500} r={4.500} fill="#0a8a2a" />
          </svg>
        </TraySlot>
        <TraySlot $w={24}>
          <svg width={14} height={14} viewBox="0 0 14 14" fill="none" stroke="#ddd">
            <path d="M0.500 13C0.500 6 6 0.500 13 0.500M3.500 13C3.500 8 8 3.500 13 3.500M6.500 13C6.500 10 9.500 7 13 7" strokeDasharray="1.500 0.700" />
            <circle cx={11.500} cy={11.500} r={1.500} fill="#fff" stroke="none" />
          </svg>
        </TraySlot>
        <TraySlot $w={20}>
          <svg width={16} height={14} viewBox="0 0 16 14" fill="none" stroke="#fff">
            <path d="M0.500 4.500H3.500L7.500 1V13L3.500 9.500H0.500Z" />
            <path d="M10 4.500C11 6 11 8 10 9.500M12.500 3C14 5 14 9 12.500 11" />
          </svg>
        </TraySlot>
        <TrayStack $w={40}>ENG<br />IN</TrayStack>
        <TrayStack $w={68}>11:09<br />12/04/2023</TrayStack>
        <TraySlot $w={42}>
          <svg width={20} height={20} viewBox="0 0 20 20">
            <path d="M0 1H16V12H12V16L8 12H0Z" fill="#fff" />
            <path d="M3 4H13M3 6.500H13M3 9H10" stroke="#222" />
            <circle cx={13} cy={13} r={6.500} fill="#222" stroke="#999" />
            <text x={13} y={17} textAnchor="middle" fontSize={11} fill="#ddd">1</text>
          </svg>
        </TraySlot>
        <TraySlot $w={12} />
      </Tray>
    </Taskbar>
  </Page>
);

export default App;
